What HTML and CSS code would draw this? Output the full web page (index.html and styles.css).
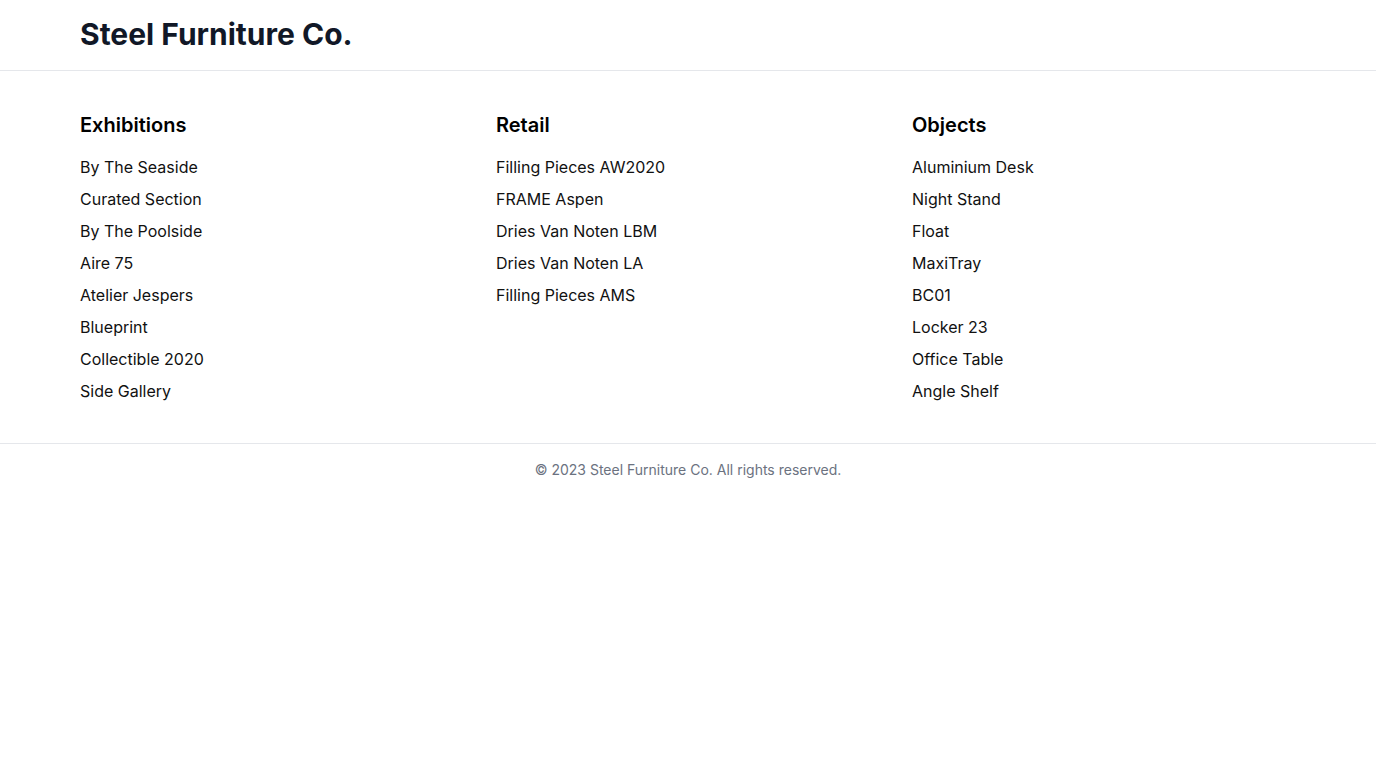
FILE: index.html
```html
<!DOCTYPE html>
<html lang="en">
<head>
<meta charset="utf-8">
<title>Steel Furniture Co.</title>
<link rel="stylesheet" href="styles.css">
</head>
<body>
<header class="site-header">
  <div class="container">
    <h1 class="brand">Steel Furniture Co.</h1>
  </div>
</header>
<main class="main">
  <div class="container grid">
    <section class="col">
      <h2 class="col-title">Exhibitions</h2>
      <ul class="links">
        <li><a href="#">By The Seaside</a></li>
        <li><a href="#">Curated Section</a></li>
        <li><a href="#">By The Poolside</a></li>
        <li><a href="#">Aire 75</a></li>
        <li><a href="#">Atelier Jespers</a></li>
        <li><a href="#">Blueprint</a></li>
        <li><a href="#">Collectible 2020</a></li>
        <li><a href="#">Side Gallery</a></li>
      </ul>
    </section>
    <section class="col">
      <h2 class="col-title">Retail</h2>
      <ul class="links">
        <li><a href="#">Filling Pieces AW2020</a></li>
        <li><a href="#">FRAME Aspen</a></li>
        <li><a href="#">Dries Van Noten LBM</a></li>
        <li><a href="#">Dries Van Noten LA</a></li>
        <li><a href="#">Filling Pieces AMS</a></li>
      </ul>
    </section>
    <section class="col">
      <h2 class="col-title">Objects</h2>
      <ul class="links">
        <li><a href="#">Aluminium Desk</a></li>
        <li><a href="#">Night Stand</a></li>
        <li><a href="#">Float</a></li>
        <li><a href="#">MaxiTray</a></li>
        <li><a href="#">BC01</a></li>
        <li><a href="#">Locker 23</a></li>
        <li><a href="#">Office Table</a></li>
        <li><a href="#">Angle Shelf</a></li>
      </ul>
    </section>
  </div>
</main>
<footer class="site-footer">
  <p class="copy">© 2023 Steel Furniture Co. All rights reserved.</p>
</footer>
</body>
</html>
```
FILE: styles.css
```css
* { box-sizing: border-box; }
html, body { margin: 0; padding: 0; }
body {
  font-family: Inter, "Noto Sans", sans-serif;
  color: #111827;
  background: #fff;
}
.container {
  padding: 0 80px;
}
.site-header {
  padding: 16px 0 18px;
  border-bottom: 1px solid #e5e7eb;
}
.brand {
  margin: 0;
  font-size: 30px;
  line-height: 36px;
  font-weight: 700;
  color: #111827;
}
.main {
  padding: 40px 0;
}
.grid {
  display: grid;
  grid-template-columns: repeat(3, 1fr);
  column-gap: 32px;
}
.col-title {
  margin: 0 0 16px;
  font-size: 20px;
  line-height: 28px;
  font-weight: 600;
  color: #000;
}
.links {
  list-style: none;
  margin: 0;
  padding: 0;
  display: flex;
  flex-direction: column;
  gap: 8px;
}
.links a {
  display: block;
  font-size: 16px;
  line-height: 24px;
  color: #111;
  text-decoration: none;
}
.site-footer {
  border-top: 1px solid #e5e7eb;
  padding: 16px 0;
  text-align: center;
}
.copy {
  margin: 0;
  font-size: 14px;
  line-height: 20px;
  color: #6b7280;
}
```
